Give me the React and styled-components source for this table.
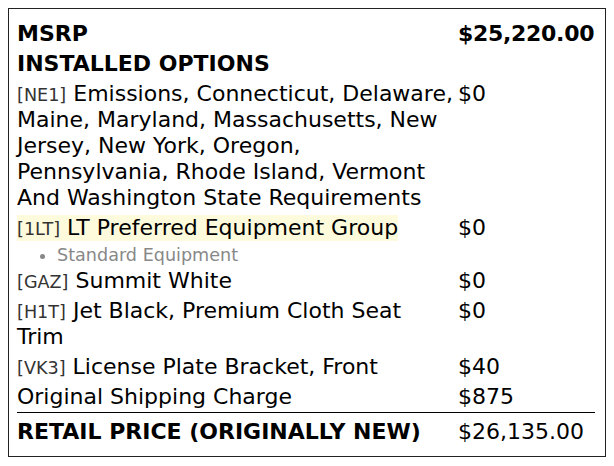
import styled, { createGlobalStyle } from 'styled-components';

const GlobalStyle = createGlobalStyle`
  body {
    margin: 8px;
    background: #ffffff;
    font-family: 'DejaVu Sans', Verdana, sans-serif;
    color: #000000;
  }
`;

const Sticker = styled.div`
  box-sizing: border-box;
  width: 598px;
  border: 1px solid #222;
  padding: 10px 10px 7px 8px;
`;

const Row = styled.div`
  display: grid;
  grid-template-columns: 437px 1fr;
  column-gap: 4px;
  padding: 2px 0;
  font-size: 22px;
  line-height: 26px;
  font-weight: ${(p) => (p.$bold ? 'bold' : 'normal')};
`;

const TotalRow = styled(Row)`
  border-top: 1px solid #000;
  padding: 6px 0 4px;
`;

const Label = styled.div`
  font-weight: ${(p) => (p.$bold ? 'bold' : 'inherit')};
`;

const Price = styled.div`
  white-space: nowrap;
  font-weight: ${(p) => (p.$bold ? 'bold' : 'normal')};
  letter-spacing: ${(p) => (p.$bold ? '-0.3px' : 'normal')};
`;

const Code = styled.span`
  font-size: 17.6px;
  line-height: 1;
  color: #333;
`;

const Highlight = styled.span`
  display: inline-block;
  background: #fdfbdc;
`;

const SubList = styled.ul`
  margin: 0;
  padding: 2px 0 1px 40px;
  font-size: 17.6px;
  line-height: 20px;
  color: #888;
`;

const options = [
  {
    code: 'NE1',
    name: 'Emissions, Connecticut, Delaware, Maine, Maryland, Massachusetts, New Jersey, New York, Oregon, Pennsylvania, Rhode Island, Vermont And Washington State Requirements',
    price: '$0',
  },
  {
    code: '1LT',
    name: 'LT Preferred Equipment Group',
    price: '$0',
    highlight: true,
    notes: ['Standard Equipment'],
  },
  { code: 'GAZ', name: 'Summit White', price: '$0' },
  { code: 'H1T', name: 'Jet Black, Premium Cloth Seat Trim', price: '$0' },
  { code: 'VK3', name: 'License Plate Bracket, Front', price: '$40' },
];

const OptionLabel = ({ code, name, highlight }) => {
  const content = (
    <>
      <Code>[{code}]</Code> {name}
    </>
  );
  return highlight ? <Highlight>{content}</Highlight> : content;
};

const App = () => {
  return (
    <>
      <GlobalStyle />
      <Sticker>
        <Row $bold>
          <Label>MSRP</Label>
          <Price $bold>$25,220.00</Price>
        </Row>
        <Row $bold>
          <Label>INSTALLED OPTIONS</Label>
          <div />
        </Row>
        {options.map((opt) => (
          <div key={opt.code}>
            <Row>
              <Label>
                <OptionLabel code={opt.code} name={opt.name} highlight={opt.highlight} />
              </Label>
              <Price>{opt.price}</Price>
            </Row>
            {opt.notes && (
              <SubList>
                {opt.notes.map((n) => (
                  <li key={n}>{n}</li>
                ))}
              </SubList>
            )}
          </div>
        ))}
        <Row>
          <Label>Original Shipping Charge</Label>
          <Price>$875</Price>
        </Row>
        <TotalRow>
          <Label $bold>RETAIL PRICE (ORIGINALLY NEW)</Label>
          <Price>$26,135.00</Price>
        </TotalRow>
      </Sticker>
    </>
  );
};

export default App;
